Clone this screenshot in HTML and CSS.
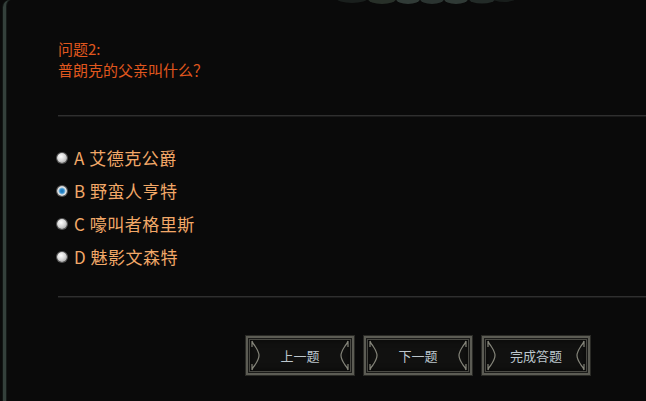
FILE: index.html
```html
<!DOCTYPE html>
<html lang="zh">
<head>
<meta charset="utf-8">
<link rel="stylesheet" href="styles.css">
</head>
<body>
<div class="frame">
  <svg class="ornament" width="180" height="8" viewBox="0 0 180 8">
    <ellipse cx="16" cy="-2" rx="16" ry="5" fill="#1a1f1d"/>
    <ellipse cx="46" cy="-1" rx="14" ry="5" fill="#283029"/>
    <ellipse cx="72" cy="-1" rx="12" ry="5" fill="#313b37"/>
    <ellipse cx="96" cy="-1" rx="12" ry="5" fill="#2b3431"/>
    <ellipse cx="120" cy="-1" rx="12" ry="5" fill="#303a36"/>
    <ellipse cx="146" cy="-1" rx="13" ry="4.5" fill="#232b28"/>
    <ellipse cx="168" cy="-2" rx="12" ry="4" fill="#181d1b"/>
  </svg>
  <div class="content">
    <div class="title">问题2:<br>普朗克的父亲叫什么？</div>
    <div class="rule"></div>
    <ul class="options">
      <li class="option"><span class="radio"></span>A 艾德克公爵</li>
      <li class="option"><span class="radio checked"></span>B 野蛮人亨特</li>
      <li class="option"><span class="radio"></span>C 嚎叫者格里斯</li>
      <li class="option"><span class="radio"></span>D 魅影文森特</li>
    </ul>
    <div class="rule"></div>
    <div class="buttons">
      <div class="btn">
        <svg class="br" width="9" height="31" viewBox="0 0 9 31"><path d="M1 1 Q2 4 4 6 Q8 12 8 15.5 Q8 19 4 25 Q2 27 1 30 M1 1 L1 7 M1 24 L1 30" stroke="#85857a" stroke-width="1.2" fill="none"/></svg>
        <span class="label">上一题</span>
        <svg class="br" width="9" height="31" viewBox="0 0 9 31"><path d="M8 1 Q7 4 5 6 Q1 12 1 15.5 Q1 19 5 25 Q7 27 8 30 M8 1 L8 7 M8 24 L8 30" stroke="#85857a" stroke-width="1.2" fill="none"/></svg>
      </div>
      <div class="btn">
        <svg class="br" width="9" height="31" viewBox="0 0 9 31"><path d="M1 1 Q2 4 4 6 Q8 12 8 15.5 Q8 19 4 25 Q2 27 1 30 M1 1 L1 7 M1 24 L1 30" stroke="#85857a" stroke-width="1.2" fill="none"/></svg>
        <span class="label">下一题</span>
        <svg class="br" width="9" height="31" viewBox="0 0 9 31"><path d="M8 1 Q7 4 5 6 Q1 12 1 15.5 Q1 19 5 25 Q7 27 8 30 M8 1 L8 7 M8 24 L8 30" stroke="#85857a" stroke-width="1.2" fill="none"/></svg>
      </div>
      <div class="btn">
        <svg class="br" width="9" height="31" viewBox="0 0 9 31"><path d="M1 1 Q2 4 4 6 Q8 12 8 15.5 Q8 19 4 25 Q2 27 1 30 M1 1 L1 7 M1 24 L1 30" stroke="#85857a" stroke-width="1.2" fill="none"/></svg>
        <span class="label">完成答题</span>
        <svg class="br" width="9" height="31" viewBox="0 0 9 31"><path d="M8 1 Q7 4 5 6 Q1 12 1 15.5 Q1 19 5 25 Q7 27 8 30 M8 1 L8 7 M8 24 L8 30" stroke="#85857a" stroke-width="1.2" fill="none"/></svg>
      </div>
    </div>
  </div>
</div>
</body>
</html>
```
FILE: styles.css
```css
html, body {
  margin: 0;
  padding: 0;
  background: #0a0a0a;
  height: 100%;
  overflow: hidden;
}
body {
  font-family: "Noto Sans CJK SC", "Noto Sans", sans-serif;
  padding-left: 3px;
  box-sizing: border-box;
}
.frame {
  position: relative;
  height: 100%;
  border-left: 3px solid #34403b;
  border-top-left-radius: 7px;
  box-shadow: inset 1px 0 0 #151a18, -1px 0 0 #121614;
}
.ornament {
  position: absolute;
  top: 0;
  left: 330px;
}
.content {
  padding: 38px 0 0 52px;
}
.title {
  color: #e0571e;
  font-size: 15px;
  line-height: 21px;
}
.rule {
  height: 1px;
  background: #2f2f2f;
  border-bottom: 1px solid #1a1a1a;
}
.title + .rule {
  margin-top: 35px;
}
.options {
  list-style: none;
  margin: 24px 0 23px;
  padding: 0;
}
.option {
  display: flex;
  align-items: center;
  height: 33px;
  color: #f2a868;
  font-size: 17px;
  letter-spacing: 0.5px;
  gap: 7px;
}
.radio {
  width: 10px;
  height: 10px;
  border-radius: 50%;
  margin-left: -1px;
  background: radial-gradient(circle at 40% 35%, #ffffff 0%, #d8d8d8 45%, #8c8c8c 100%);
  box-shadow: 0 0 0 1px #555;
}
.radio.checked {
  background: radial-gradient(circle at 50% 50%, #1a6ea8 0%, #2a8ad0 28%, #7fb6da 42%, #e8e8e8 55%, #a0a0a0 100%);
}
.buttons {
  display: flex;
  gap: 10px;
  margin-top: 38px;
  padding-left: 188px;
}
.btn {
  width: 108px;
  height: 39px;
  box-sizing: border-box;
  border: 2px solid #5c5c54;
  outline: 1px solid #2a2a26;
  box-shadow: inset 0 0 0 1px #1a1a18, inset 0 0 0 2px #4a4a44, inset 0 0 8px #000;
  background: #111110;
  display: flex;
  align-items: center;
  justify-content: space-between;
  padding: 0 3px;
}
.label {
  color: #bcc6cc;
  font-size: 13px;
}
.br {
  display: block;
}
```
